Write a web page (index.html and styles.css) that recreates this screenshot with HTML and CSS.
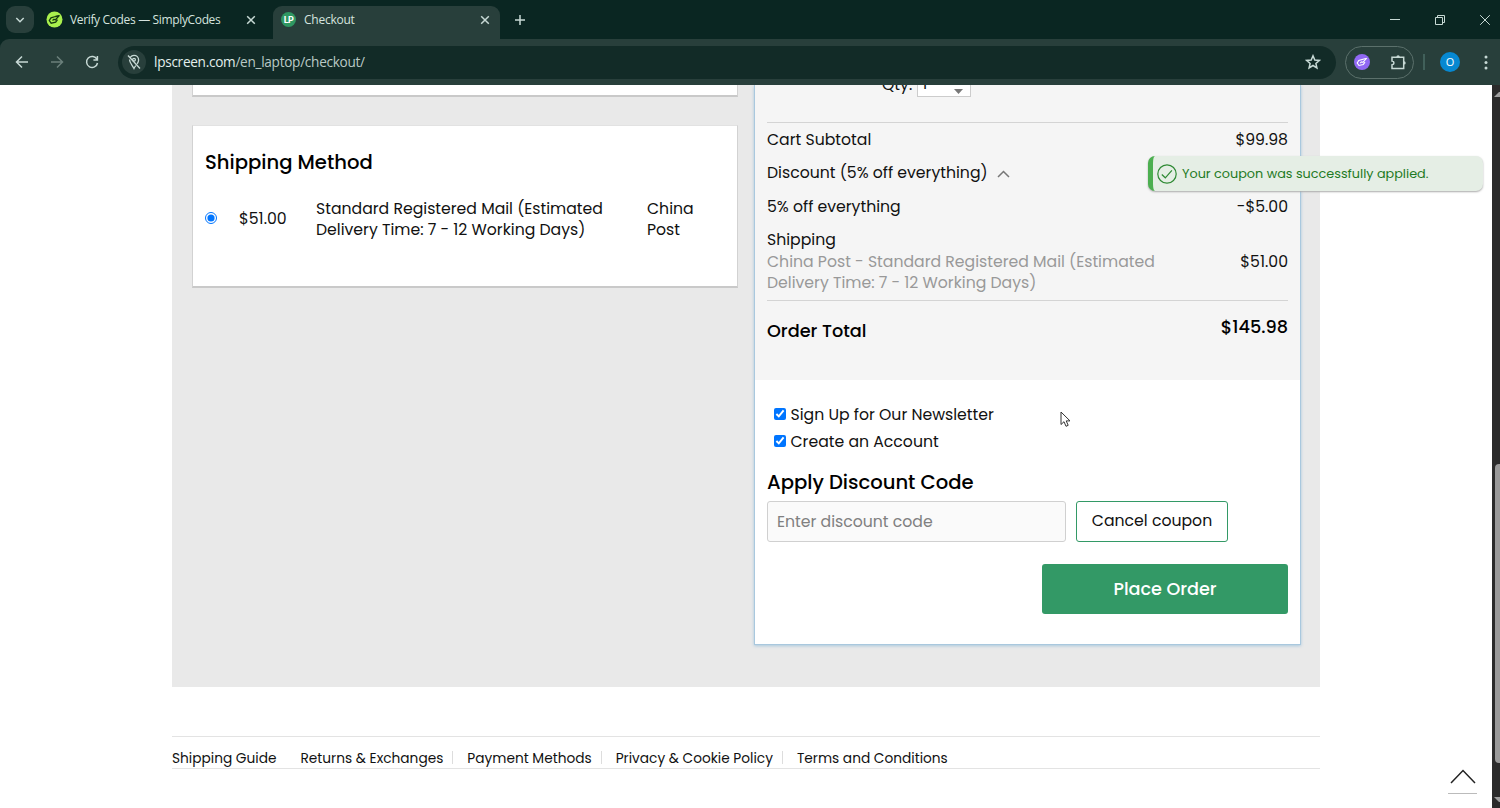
FILE: index.html
```html
<!DOCTYPE html>
<html lang="en">
  <head>
    <meta charset="UTF-8" />
    <meta name="viewport" content="width=device-width" />
    <title>Checkout</title>
    <link rel="stylesheet" href="styles.css">
  </head>
  <body>
    <header class="browser">
      <div class="tabs">
        <button class="tab-search">
          <svg width="10" height="8" viewBox="0 0 10 8"><path d="M1.3 2 5 5.7 8.7 2" /></svg>
        </button>
        <div class="tab">
          <svg class="favicon" width="17" height="17" viewBox="0 0 17 17">
            <circle class="lime" cx="8.5" cy="8.5" r="8" />
            <path class="tag" d="M9.500 5.500 5 6.800 3.300 9.500 5.200 12.200l4.500-1L11.500 8.700M6.500 9.500 8 8.300l1.300.7 4.200-4.700M9.500 5.500l3-.8" />
          </svg>
          <span class="tab-title">Verify Codes — SimplyCodes</span>
          <svg width="10" height="10" viewBox="0 0 10 10"><path d="m1.2 1.2 7.6 7.6M8.8 1.2 1.2 8.8" /></svg>
        </div>
        <div class="tab tab-active">
          <span class="favicon lp">LP</span>
          <span class="tab-title">Checkout</span>
          <svg width="10" height="10" viewBox="0 0 10 10"><path d="m1.2 1.2 7.6 7.6M8.8 1.2 1.2 8.8" /></svg>
        </div>
        <svg class="new-tab" width="12" height="12" viewBox="0 0 12 12"><path d="M6 1v10M1 6h10" /></svg>
        <div class="window-buttons">
          <svg width="12" height="12" viewBox="0 0 12 12"><path d="M1 5.5h10" /></svg>
          <svg width="12" height="12" viewBox="0 0 12 12"><path d="M1.5 3.5h7v7h-7zM3.5 3V1.5h7v7H9" /></svg>
          <svg width="12" height="12" viewBox="0 0 12 12"><path d="m1.2 1.2 9.6 9.6M10.8 1.2 1.2 10.8" /></svg>
        </div>
      </div>
      <div class="toolbar">
        <svg width="14" height="14" viewBox="0 0 14 14"><path d="M13 7H1.5M7 1.5 1.5 7 7 12.5" /></svg>
        <svg class="dim" width="14" height="14" viewBox="0 0 14 14"><path d="M1 7h11.5M7 1.5 12.500 7 7 12.5" /></svg>
        <svg width="14" height="14" viewBox="0 0 14 14"><path d="M12 4.500A5.500 5.500 0 1 0 12.500 8M12.400 1v4H8.400" /></svg>
        <div class="address">
          <span class="site-info">
            <svg width="14" height="16" viewBox="0 0 14 16"><path d="M3.500 3.200C4.300 2 5.600 1.400 7 1.400c2.600 0 4.600 2 4.600 4.500 0 1.300-.6 2.600-1.400 3.900M2.500 5.500c0 3.300 3 6 4.500 9 .5-1 1.100-1.900 1.800-2.800M1 1.500l12 13" /><circle cx="7" cy="5.800" r="1.400" /></svg>
          </span>
          <span class="url"><b>lpscreen.com</b>/en_laptop/checkout/</span>
          <svg width="16" height="16" viewBox="0 0 16 16"><path d="m8 1.800 1.800 4.200 4.500.4-3.400 3 1 4.500L8 11.500l-3.900 2.400 1-4.500-3.400-3 4.500-.4z" /></svg>
        </div>
        <div class="extensions">
          <svg width="16" height="16" viewBox="0 0 16 16">
            <circle class="purple" cx="8" cy="8" r="8" />
            <path class="tag-light" d="M9 5.300 4.800 6.500 3.200 9l1.800 2.500 4.200-.9 1.800-2.400M6.200 9l1.500-1.200 1.200.6 4-4.400M9 5.300l2.800-.8" />
          </svg>
          <svg width="17" height="17" viewBox="0 0 17 17"><path d="M2 3.300h11.700v11.200H2v-3.700c2.600-.3 2.600-3.500 0-3.800z" /><path class="knobs" d="M6.400 3a1.700 1.700 0 0 1 3.400 0zM14 7.200a1.700 1.700 0 0 1 0 3.400z" /></svg>
        </div>
        <span class="divider"></span>
        <span class="avatar">O</span>
        <svg class="menu" width="4" height="15" viewBox="0 0 4 15"><circle cx="2" cy="2" r="1.500" /><circle cx="2" cy="7.500" r="1.500" /><circle cx="2" cy="13" r="1.500" /></svg>
      </div>
    </header>

    <div class="viewport">
      <div class="page">
        <main class="checkout">
          <div class="left-col">
            <section class="card card-previous"></section>
            <section class="card shipping-method">
              <h2>Shipping Method</h2>
              <div class="method">
                <input type="radio" name="shipping" checked />
                <span class="method-price">$51.00</span>
                <span class="method-name">Standard Registered Mail (Estimated<br />Delivery Time: 7 - 12 Working Days)</span>
                <span class="method-carrier">China<br />Post</span>
              </div>
            </section>
          </div>

          <section class="order">
            <div class="summary">
              <div class="product">
                <span class="qty-label">Qty:</span>
                <span class="qty">1
                  <svg width="9" height="5" viewBox="0 0 9 5"><path d="M0 0h9L4.500 5z" /></svg>
                </span>
              </div>
              <div class="totals">
                <div class="row"><span>Cart Subtotal</span><span>$99.98</span></div>
                <div class="row">
                  <span>Discount (5% off everything)
                    <svg class="caret" width="13" height="8" viewBox="0 0 13 8"><path d="m1 7 5.500-5.500L12 7" /></svg>
                  </span>
                </div>
                <div class="row"><span>5% off everything</span><span>-$5.00</span></div>
                <div class="shipping-row">
                  <div>Shipping<br /><span class="muted">China Post - Standard Registered Mail (Estimated<br />Delivery Time: 7 - 12 Working Days)</span></div>
                  <span>$51.00</span>
                </div>
              </div>
              <div class="grand-total"><strong>Order Total</strong><strong class="grand-price">$145.98</strong></div>
            </div>
            <div class="actions">
              <label class="check"><input type="checkbox" checked /><span>Sign Up for Our Newsletter</span></label>
              <label class="check"><input type="checkbox" checked /><span>Create an Account</span></label>
              <h2>Apply Discount Code</h2>
              <div class="coupon">
                <input class="code" type="text" placeholder="Enter discount code" />
                <button class="cancel">Cancel coupon</button>
              </div>
              <button class="place-order">Place Order</button>
            </div>
          </section>
        </main>

        <footer class="links">
          <a>Shipping Guide</a>
          <a>Returns &amp; Exchanges</a>
          <a>Payment Methods</a>
          <a>Privacy &amp; Cookie Policy</a>
          <a>Terms and Conditions</a>
        </footer>
      </div>

      <div class="scrollbar">
        <svg width="8" height="5" viewBox="0 0 8 5"><path d="M2 5 7 0h1v5z" /></svg>
        <span class="thumb"></span>
        <svg width="8" height="5" viewBox="0 0 8 5"><path d="M2 0h6v5H7z" /></svg>
      </div>
    </div>

    <div class="toast">
      <svg width="20" height="20" viewBox="0 0 20 20"><circle cx="10" cy="10" r="9.200" /><path d="m4.800 10.500 3.500 3.300 6.600-7.500" /></svg>
      <span>Your coupon was successfully applied.</span>
    </div>

    <a class="to-top">
      <svg width="26" height="15" viewBox="0 0 26 15"><path d="M1 14 13 1.500 25 14" /></svg>
    </a>

    <svg class="cursor" width="11" height="17" viewBox="0 0 11 17"><path d="M1 1v12.500l3-2.800 2 4.600 2.200-1-2-4.400H10z" /></svg>
  </body>
</html>
```

FILE: styles.css
```css
:root {
  --frame: #0a2622;
  --toolbar: #283f3b;
  --icon: #c7d9d5;
  --green: #339966;
  --line: #d4d4d4;
}

* {
  box-sizing: border-box;
}

body {
  margin: 0;
  height: 808px;
  overflow: hidden;
  display: flex;
  flex-direction: column;
  font: 15.7px/21.4px Poppins, Inter, sans-serif;
  color: #111;
  background: #fff;
}

svg {
  display: block;
  flex: none;
  fill: none;
  stroke: var(--icon);
  stroke-width: 1.5;
}

h2 {
  margin: 0;
  font-size: 19.6px;
  font-weight: 500;
  line-height: 28px;
  color: #000;
}

input {
  margin: 0;
}

/* browser window */

.browser {
  flex: none;
  height: 85px;
  background: var(--frame);
  font-family: "Segoe UI", "Open Sans", sans-serif;
  color: #d5e3df;
}

.tabs {
  display: flex;
  align-items: center;
  height: 39px;
}

.tab-search {
  display: flex;
  align-items: center;
  justify-content: center;
  width: 28px;
  height: 27px;
  margin-left: 6px;
  padding: 0;
  border: 0;
  border-radius: 9px;
  background: var(--toolbar);
}

.tab {
  display: flex;
  align-items: center;
  width: 239px;
  height: 33px;
  padding: 0 17px 0 12px;
  font-size: 12px;
  letter-spacing: -0.35px;
  line-height: 16px;
}

.tab-title {
  flex: 1;
  padding-left: 7px;
  white-space: nowrap;
}

.tab-active {
  align-self: flex-end;
  width: 227px;
  padding: 0 10px 6px 8px;
  border-radius: 9px 9px 0 0;
  background: var(--toolbar);
  letter-spacing: -0.25px;
}

.tab-active .tab-title {
  padding-left: 8px;
}

.lime {
  fill: #a9f04d;
  stroke: none;
}

.tag {
  stroke: #163a10;
  stroke-width: 1.3;
}

.lp {
  width: 15px;
  height: 15px;
  border-radius: 50%;
  background: #2f9762;
  color: #fff;
  font: bold 9px/15px Inter, sans-serif;
  letter-spacing: -0.6px;
  text-align: center;
}

.new-tab {
  margin-left: 14px;
}

.window-buttons {
  display: flex;
  gap: 33px;
  margin-left: auto;
  margin-right: 9px;
}

.window-buttons svg {
  stroke-width: 1;
}

.toolbar {
  display: flex;
  align-items: center;
  height: 46px;
  padding: 0 12px 0 15px;
  border-radius: 9px 0 0 0;
  background: var(--toolbar);
}

.toolbar > svg {
  margin-right: 21px;
}

.toolbar .dim {
  stroke: #6b807b;
}

.address {
  display: flex;
  align-items: center;
  flex: none;
  width: 1218px;
  height: 33px;
  margin-left: -2px;
  padding: 0 15px 0 4px;
  border-radius: 17px;
  background: #122b27;
}

.site-info {
  display: flex;
  align-items: center;
  justify-content: center;
  width: 24px;
  height: 24px;
  border-radius: 50%;
  background: var(--toolbar);
}

.site-info svg {
  stroke-width: 1.3;
}

.url {
  flex: 1;
  padding-left: 8px;
  font-size: 13.6px;
  letter-spacing: -0.28px;
  color: #b9c9c5;
}

.url b {
  font-weight: 400;
  color: #e3efec;
}

.extensions {
  display: flex;
  align-items: center;
  flex: none;
  gap: 20px;
  width: 69px;
  height: 33px;
  margin-left: 9px;
  padding-left: 8px;
  border: 1px solid #5b706b;
  border-radius: 17px;
}

.purple {
  fill: #9168f4;
  stroke: none;
}

.tag-light {
  stroke: #fff;
  stroke-width: 1.1;
}

.knobs {
  fill: var(--icon);
  stroke: none;
}

.divider {
  flex: none;
  width: 2px;
  height: 16px;
  margin: 0 15px 0 9px;
  background: #41605a;
}

.avatar {
  flex: none;
  width: 20px;
  height: 20px;
  border-radius: 50%;
  background: #0788d1;
  color: #fff;
  font-size: 11px;
  line-height: 20px;
  text-align: center;
}

.toolbar .menu {
  margin: 0 0 0 24px;
  fill: var(--icon);
  stroke: none;
}

/* page */

.viewport {
  flex: 1;
  display: flex;
  min-height: 0;
  overflow: hidden;
}

.page {
  width: 1492px;
  padding-left: 172px;
}

.checkout {
  display: flex;
  justify-content: space-between;
  align-items: flex-start;
  width: 1148px;
  height: 602px;
  padding: 0 20px;
  background: #e9e9e9;
}

.left-col {
  width: 546px;
}

.card {
  border: 1px solid #d2d2d2;
  border-bottom: 2px solid #c9c9c9;
  background: #fff;
}

.card-previous {
  height: 12px;
  border-top: 0;
}

.shipping-method {
  height: 163px;
  margin-top: 28px;
  padding: 22px 12px 0;
  border-top-color: #e2e2e2;
}

.method {
  display: flex;
  align-items: center;
  margin-top: 22px;
}

.method input {
  width: 12px;
  height: 12px;
  margin-top: -2px;
}

.method-price {
  width: 77px;
  margin: -1px 0 0 22px;
}

.method-name {
  width: 331px;
  white-space: nowrap;
}

.order {
  width: 547px;
  height: 560px;
  margin-right: -1px;
  border: 1px solid #a9c8de;
  border-top: 0;
  background: #fff;
  box-shadow: 0 1px 3px #a9c8de;
}

.summary {
  height: 295px;
  padding: 0 12px;
  background: #f5f5f5;
}

.product {
  display: flex;
  height: 38px;
  padding-left: 115px;
  border-bottom: 1px solid var(--line);
}

.qty-label {
  margin-top: -11px;
}

.qty {
  display: flex;
  align-items: center;
  justify-content: space-between;
  width: 54px;
  height: 27px;
  margin: -15px 0 0 5px;
  padding: 0 7px 0 4px;
  border: 1px solid #ccc;
  background: #fff;
}

.qty svg {
  margin-top: 15px;
  fill: #777;
  stroke: none;
}

.totals {
  height: 178px;
  border-bottom: 1px solid var(--line);
}

.row {
  display: flex;
  align-items: center;
  justify-content: space-between;
  height: 33.4px;
}

.caret {
  display: inline-block;
  margin-left: 5px;
  stroke: #777;
}

.shipping-row {
  display: flex;
  justify-content: space-between;
  align-items: center;
  margin-top: 6px;
}

.muted {
  color: #999;
}

.grand-total {
  display: flex;
  justify-content: space-between;
  padding-top: 19px;
  font-size: 17.7px;
  color: #000;
}

.grand-total strong {
  font-weight: 500;
}

.grand-price {
  margin-top: -4px;
}

.actions {
  padding: 21px 12px 0;
}

.check {
  display: flex;
  align-items: center;
  gap: 4.5px;
  height: 27px;
  padding-left: 7px;
}

.check input {
  width: 12px;
  height: 12px;
  margin-top: -2px;
}

.actions h2 {
  margin-top: 12.6px;
}

.coupon {
  display: flex;
  gap: 10px;
  margin-top: 5px;
}

.code {
  width: 299px;
  height: 41px;
  padding: 0 9px;
  border: 1px solid #d0d0d0;
  border-radius: 3px;
  background: #fafafa;
  font: inherit;
}

.code::placeholder {
  color: #808080;
}

.cancel {
  width: 152px;
  height: 41px;
  padding: 0;
  border: 1px solid var(--green);
  border-radius: 3px;
  background: #fff;
  color: #111;
  font: inherit;
}

.place-order {
  display: block;
  width: 246px;
  height: 50px;
  margin: 22px 0 0 auto;
  border: 0;
  border-radius: 3px;
  background: var(--green);
  color: #fff;
  font: 500 17.6px Poppins, Inter, sans-serif;
}

.links {
  display: flex;
  align-items: center;
  width: 1148px;
  height: 33px;
  margin-top: 49px;
  padding-top: 10px;
  border-top: 1px solid #e3e3e3;
  border-bottom: 1px solid #e3e3e3;
  font-size: 13.72px;
}

.links a {
  height: 13px;
  margin-right: 14px;
  padding-right: 9px;
  border-right: 1px solid #ddd;
  line-height: 15.5px;
  white-space: nowrap;
}

.links a:first-child,
.links a:last-child {
  border-color: transparent;
}

.scrollbar {
  display: flex;
  flex-direction: column;
  justify-content: space-between;
  width: 8px;
  padding: 7px 0 6px;
  background: #2b2b2b;
}

.scrollbar svg {
  fill: #9f9f9f;
  stroke: none;
}

.thumb {
  width: 8px;
  height: 299px;
  margin: 332px 0 0 3px;
  border-radius: 5px;
  background: #9a9a9a;
}

/* things over the page */

.toast {
  position: absolute;
  top: 156px;
  left: 1148px;
  display: flex;
  align-items: center;
  gap: 5px;
  width: 335px;
  height: 35px;
  padding-left: 4px;
  border-left: 5px solid #4caf50;
  border-radius: 7px;
  background: #e5eee5;
  box-shadow: 0 1px 2px #aaa;
  color: #1f7a24;
  font-size: 12.8px;
}

.toast svg {
  stroke: #2f8a34;
  stroke-width: 1.2;
}

.to-top {
  position: absolute;
  top: 769px;
  left: 1448px;
  display: flex;
  justify-content: center;
  width: 29px;
  height: 25px;
  border-bottom: 1px solid #bbb;
}

.to-top svg {
  stroke: #222;
}

.cursor {
  position: absolute;
  top: 411px;
  left: 1060px;
  fill: #fff;
  stroke: #333;
  stroke-width: 1;
}
```
